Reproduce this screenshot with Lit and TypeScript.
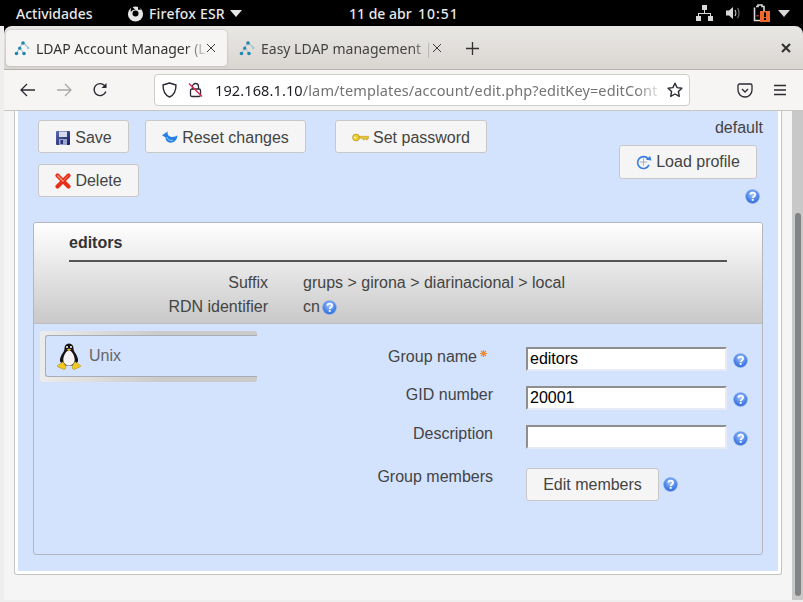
import { LitElement, html, css, svg } from "lit";
import { customElement } from "lit/decorators.js";

let uid = 0;

const help = () => {
  const id = `hg${uid++}`;
  return html`<svg class="help" width="15" height="15" viewBox="0 0 16 16" aria-label="Help">
    <defs><radialGradient id=${id} cx="50%" cy="35%" r="70%"><stop offset="0" stop-color="#a9c8f8"/><stop offset="0.6" stop-color="#4d86ea"/><stop offset="1" stop-color="#2d63cf"/></radialGradient></defs>
    <circle cx="8" cy="8" r="7.4" fill="url(#${id})" stroke="#8fb2ee" stroke-width=".6"/>
    <path d="M5.6 6.1c.2-1.5 1.3-2.2 2.6-2.2 1.5 0 2.5.9 2.5 2.1 0 1.9-2.5 1.9-2.5 3.7" fill="none" stroke="#fff" stroke-width="1.9"/>
    <rect x="7.2" y="10.6" width="2" height="2" fill="#fff"/>
  </svg>`;
};

const ldapIcon = html`<svg class="fav" width="16" height="16" viewBox="0 0 16 16">
  <path d="M9 2.5 2.5 13.5M9 2.5 14.5 8M6 8l4 5.5" stroke="#a9c4cf" stroke-width="1.1" fill="none"/>
  <g fill="#1f86ad"><circle cx="9" cy="3" r="1.8"/><circle cx="5.7" cy="8.2" r="1.6"/><circle cx="2.5" cy="13.5" r="1.8"/><circle cx="10" cy="13.5" r="1.8"/></g>
  <circle cx="14.2" cy="8" r="1.2" fill="#9fc3d1"/>
</svg>`;

const closeX = html`<svg width="10" height="10" viewBox="0 0 10 10"><path d="M1 1l8 8M9 1l-8 8" stroke="#3c3c3c" stroke-width="1" fill="none"/></svg>`;

const ffIcon = html`<svg width="17" height="17" viewBox="0 0 17 17">
  <circle cx="8.5" cy="9" r="7.6" fill="#e6e6e6"/>
  <circle cx="8.5" cy="8.4" r="3" fill="#000"/>
  <path d="M5.5 .8c.2 2 1 3 3 3.6-2 .2-3.700 1-4.600 2.700C3.400 4.800 4 2.400 5.500.8z" fill="#000"/>
  <path d="M11 1.200 14.500 4.500l-3.500.3z" fill="#000"/>
</svg>`;

const saveIcon = html`<svg class="sv" width="14" height="14" viewBox="0 0 14 14">
  <defs><linearGradient id="sv" x1="0" y1="0" x2="1" y2="1"><stop offset="0" stop-color="#5c6bb0"/><stop offset="1" stop-color="#141a5c"/></linearGradient></defs>
  <rect width="14" height="14" rx="1" fill="url(#sv)"/>
  <rect x="3" y="0.5" width="8" height="5.5" fill="#d5dbef"/>
  <rect x="3" y="8" width="8" height="6" fill="#9aa5cf"/>
  <rect x="4.5" y="9" width="2.5" height="4" fill="#2a3478"/>
</svg>`;

const resetIcon = html`<svg width="16" height="13" viewBox="0 0 17 13">
  <path d="M0 4 6 0v2.600c0 2 2.400 3.400 4.900 3.400 2.400 0 4.300-.5 5.600-1.800-.4 4.600-3 7.800-7.400 7.800C5 12 3.800 8.800 3.800 6.600L0 4z" fill="#2780e3"/>
  <path d="M5 6c1 2.400 3 4 6.500 3.600" stroke="#a7d0f7" stroke-width="1" fill="none"/>
</svg>`;

const keyIcon = html`<svg width="17" height="9" viewBox="0 0 17 9">
  <circle cx="4" cy="4.500" r="3.400" fill="#f2cf2e" stroke="#a8901c" stroke-width=".7"/>
  <path d="M7 3.300h9.500v2h-1v1.500h-1.500v-1.500h-1.500v1.500h-1.500v-1.500H7z" fill="#efc928" stroke="#a48c1c" stroke-width=".5"/>
  <circle cx="3" cy="4.500" r="1" fill="#fff7c4"/>
</svg>`;

const delIcon = html`<svg width="16" height="16" viewBox="0 0 16 16">
  <path d="M2.500 2.500 13.500 13.500M13.500 2.500 2.500 13.500" stroke="#e82f1a" stroke-width="4.100" stroke-linecap="round"/>
  <path d="M2.800 2.800 8 8" stroke="#ff9a80" stroke-width="1.300" stroke-linecap="round"/>
  <path d="M13.200 2.800 8 8" stroke="#ff8066" stroke-width="1" stroke-linecap="round"/>
</svg>`;

const loadIcon = html`<svg width="16" height="17" viewBox="0 0 17 17">
  <path d="M13.200 5A6.300 6.300 0 1 0 13.800 11" fill="none" stroke="#3b7de0" stroke-width="1.700"/>
  <path d="M10.500 5.500 16.500 6.500 15 1.500z" fill="#3b7de0"/>
  <path d="M8 4v8M4 8h8" stroke="#8c9bb4" stroke-width=".8"/>
</svg>`;

const penguin = html`<svg width="24" height="27" viewBox="0 0 24 27">
  <path d="M12 0.500c-3 0-4.500 2.200-4.500 5 0 2.300-1 3.200-2.300 5.300C3.700 13.500 2.600 16 3 18.500L7 22.500h10l4-4c.4-2.500-.7-5-2.200-7.700-1.300-2.100-2.300-3-2.300-5.300 0-2.800-1.500-5-4.500-5z" fill="#14141a"/>
  <path d="M12 7.500c-2.600 0-5.700 5-5.700 9.300 0 3.500 2.500 5.700 5.700 5.700s5.700-2.200 5.700-5.700c0-4.300-3.100-9.300-5.700-9.300z" fill="#f4f4f4"/>
  <path d="M9.800 6.500 12 5.500l2.200 1L12 8.200z" fill="#e8b923"/>
  <circle cx="10" cy="4" r="1" fill="#fff"/><circle cx="14" cy="4" r="1" fill="#fff"/>
  <path d="M5 19.500 .5 22.500c-.5.600 0 1.200.7 1.400l5 2.300c1.300.6 2.300 0 2.500-1.200.2-1.800-1-4.200-2-5.500-.5-.6-1.200-.7-1.700 0zM19 19.500l4.500 3c.5.600 0 1.200-.7 1.400l-5 2.300c-1.300.6-2.300 0-2.500-1.200-.2-1.800 1-4.200 2-5.500.5-.6 1.200-.7 1.700 0z" fill="#f4c81c" stroke="#a88410" stroke-width=".5"/>
</svg>`;

const star = svg`<path d="M8 1.200l2.100 4.400 4.800.6-3.500 3.300.9 4.800L8 12l-4.300 2.300.9-4.800L1.100 6.200l4.800-.6z" fill="none" stroke="#2b2a33" stroke-width="1.400" stroke-linejoin="round"/>`;

@customElement("app-root")
export class AppRoot extends LitElement {
  static styles = css`
    :host { display: block; width: 803px; height: 602px; overflow: hidden; font-family: "Liberation Sans", Arial, sans-serif; font-size: 16px; color: #444; }
    .root { display: flex; flex-direction: column; height: 602px; background: #eeeeee; }
    .topbar { height: 26px; flex: none; background: #000; color: #e8e8e8; display: flex; align-items: center; font-family: "Noto Sans", sans-serif; font-size: 14px; font-weight: 500; padding-left: 16px; box-sizing: border-box; }
    .act { width: 111px; }
    .ffmenu { display: flex; align-items: center; gap: 5px; width: 222px; letter-spacing: .2px; }
    .clock { width: 347px; white-space: pre; }
    .time { letter-spacing: 1px; margin-left: -1px; }
    .tray { display: flex; align-items: center; }
    .vol { margin-left: 13px; }
    .batt { margin-left: 11px; }
    .caret { margin-left: 8px; }
    .shell { flex: 1; min-height: 0; display: flex; flex-direction: column; padding: 0 0 2px 4px; background:
      linear-gradient(#000, #000) 4px 0 / 8px 8px no-repeat,
      linear-gradient(#000, #000) right 0 top 0 / 8px 8px no-repeat,
      #eeeeee; }
    .tabbar { height: 44px; flex: none; box-sizing: border-box; display: flex; align-items: center; background: linear-gradient(#e9e7e4, #d9d6d2); border-bottom: 1px solid #b4b2af; border-radius: 8px 8px 0 0; font-family: "Noto Sans", sans-serif; font-size: 14px; color: #333; padding-top: 1px; }
    .tab { display: flex; align-items: center; height: 36px; box-sizing: border-box; }
    .tab.active { margin-left: 2px; width: 221px; background: #f6f5f4; border-radius: 4px; padding-left: 8px; box-shadow: 0 0 2px rgba(0,0,0,.25); }
    .tab.other { width: 222px; margin-left: 4px; padding-left: 8px; color: #444; }
    .tab .name { margin-left: 6px; flex: 1; white-space: nowrap; overflow: hidden; -webkit-mask-image: linear-gradient(90deg, #000 87%, transparent 100%); mask-image: linear-gradient(90deg, #000 87%, transparent 100%); }
    .tab svg { flex: none; }
    .tab .x { margin: 0 11px 0 -2px; display: flex; }
    .plus { margin-left: 13px; display: flex; }
    .winclose { margin-left: auto; margin-right: 12px; display: flex; }
    .toolbar { height: 41px; flex: none; box-sizing: border-box; background: #f6f5f3; display: flex; align-items: center; border-bottom: 1px solid #c6c6c4; }
    .nav { display: flex; justify-content: center; width: 36px; }
    .nav.first { margin-left: 6px; }
    .urlbar { margin-left: 36px; width: 536px; height: 32px; box-sizing: border-box; background: #fff; border: 1px solid #cfcdca; border-radius: 4px; display: flex; align-items: center; font-family: "Noto Sans", sans-serif; font-size: 14.5px; color: #737373; }
    .urlbar .shield { margin-left: 7px; display: flex; }
    .urlbar .lock { margin-left: 11px; display: flex; }
    .url { margin-left: 12px; width: 448px; white-space: nowrap; overflow: hidden; letter-spacing: .12px; -webkit-mask-image: linear-gradient(90deg, #000 94%, transparent 100%); mask-image: linear-gradient(90deg, #000 94%, transparent 100%); }
    .url b { font-weight: 400; color: #1c1b22; }
    .urlbar .star { margin-left: 4px; display: flex; }
    .pocket { margin-left: 47px; display: flex; }
    .burger { margin-left: 20px; display: flex; }
    .view { flex: 1; min-height: 0; display: flex; background: #f5f5f5; }
    .page { flex: 1; min-width: 0; padding: 0 10px; }
    .scroll { width: 11px; flex: none; background: #c8c8c8; display: flex; align-items: flex-end; padding: 0 0 4px 3px; box-sizing: border-box; }
    .thumb { width: 6px; height: 383px; background: #808486; border-radius: 3px; }
    .frame { height: 464px; box-sizing: border-box; border: 1px solid #c4c4c4; border-top: 0; border-radius: 0 0 3px 3px; padding: 0 3px 3px; background: #fff; }
    .blue { height: 460px; background: #d3e2fd; box-sizing: border-box; padding: 9px 15px 0; }
    .top { height: 102px; display: flex; justify-content: space-between; padding-left: 5px; }
    .row { display: flex; }
    .row + .row { margin-top: 11px; }
    .row.first .btn { padding-top: 2px; }
    .btn { height: 33px; box-sizing: border-box; border: 1px solid #c8c8c8; border-radius: 3px; background: #f5f5f5; color: #444; display: flex; align-items: center; justify-content: center; font: inherit; gap: 4px; padding: 0; }
    .btn .sv { margin: 0 1px; }
    .save { width: 91px; } .reset { width: 161px; margin-left: 16px; } .pwd { width: 152px; margin-left: 29px; } .del { width: 101px; }
    .side { display: flex; flex-direction: column; align-items: flex-end; margin-top: -2px; }
    .side .lbl { line-height: 20px; }
    .load { width: 138px; height: 34px; margin: 7px 6px 0 0; }
    .side .help { margin: 10px 3px 0 0; }
    .help { display: block; flex: none; }
    .box { height: 333px; box-sizing: border-box; border: 1px solid #b2b7bf; border-radius: 3px; display: flex; flex-direction: column; }
    .head { height: 101px; box-sizing: border-box; background: linear-gradient(#ffffff, #c9c9c9); border-bottom: 1px solid #bdbdbd; padding: 10px 35px 0; border-radius: 2px 2px 0 0; }
    .title { margin: 0; font-size: 16px; font-weight: 700; line-height: 20px; color: #333; padding-bottom: 7px; border-bottom: 2px solid #555; }
    .meta { display: grid; grid-template-columns: 199px auto; column-gap: 35px; row-gap: 4px; margin: 11px 0 0 0; line-height: 20px; }
    .meta .k { text-align: right; }
    .meta .v { display: flex; align-items: center; gap: 2px; }
    .body { flex: 1; display: flex; padding: 7px 0 0 6px; }
    .modtab { width: 217px; height: 51px; flex: none; box-sizing: border-box; padding: 4px 0 5px 5px; background: linear-gradient(90deg, #ececec, #cbcbcb 55%); border-radius: 3px; }
    .modin { height: 42px; box-sizing: border-box; background: #d3e2fd; border: 1px solid #a8adb5; border-right: 0; border-radius: 3px 0 0 3px; display: flex; align-items: center; padding-left: 11px; color: #666; gap: 8px; }
    .form { margin: 16px 0 0 0; display: grid; grid-template-columns: 236px auto; column-gap: 33px; justify-content: start; align-content: start; }
    .f-l { text-align: right; line-height: 20px; display: flex; justify-content: flex-end; align-items: flex-start; gap: 3px; }
    .f-l .ast { margin: 3px 6px 0 0; }
    .f-c { display: flex; align-items: center; gap: 6px; height: 24px; margin-bottom: 15px; }
    .f-c .help { margin-top: 3px; }
    .f-l.sh { margin-top: -1px; }
    .inp { width: 201px; height: 24px; box-sizing: border-box; border: 2px solid; border-color: #8e8e8e #e6ebf5 #e6ebf5 #8e8e8e; background: #fff; color: #000; font: 16px "Liberation Sans", Arial, sans-serif; padding: 1px 2px; margin: 0; outline: 0; }
    .f-c.b { height: 33px; gap: 4px; margin: 4px 0 0; }
    .f-c.b .help { margin-top: 0; }
    .f-l.b { margin-top: 3px; }
    .edit { width: 133px; }
  `;

  render() {
    return html`<div class="root">
      <div class="topbar">
        <span class="act">Actividades</span>
        <span class="ffmenu">${ffIcon}<span>Firefox ESR</span>
          <svg width="12" height="7" viewBox="0 0 12 7"><path d="M0 0h12L6 7z" fill="#e8e8e8"/></svg></span>
        <span class="clock">11 de abr  <span class="time">10:51</span></span>
        <span class="tray">
          <svg width="17" height="16" viewBox="0 0 17 16" fill="#d8d8d8"><rect x="6" y="0" width="5" height="5"/><rect x="0" y="11" width="5" height="5"/><rect x="12" y="11" width="5" height="5"/><path d="M8 5h1v3h6v3h-1V9H3v2H2V8h6z"/></svg>
          <svg class="vol" width="16" height="14" viewBox="0 0 16 14"><path d="M0 4.500h3L7 1v12L3 9.500H0z" fill="#d8d8d8"/><path d="M9 4c1 1.500 1 4.500 0 6" stroke="#bbb" stroke-width="1.300" fill="none"/><path d="M11.500 2c2 2.500 2 7.500 0 10" stroke="#666" stroke-width="1.300" fill="none"/></svg>
          <svg class="batt" width="17" height="18" viewBox="0 0 17 18"><path d="M3 2.500h2V1h4v1.500h2V8M8 16.500H1.500V3.500" fill="none" stroke="#d8d8d8" stroke-width="1.600"/><rect x="3.500" y="11" width="2" height="1.500" fill="#e8402a"/><rect x="7" y="7" width="10" height="11" fill="#f0672c"/><rect x="11" y="8.500" width="2" height="4.500" fill="#000"/><rect x="11" y="14" width="2" height="2" fill="#000"/></svg>
          <svg class="caret" width="12" height="7" viewBox="0 0 12 7"><path d="M0 0h12L6 7z" fill="#d8d8d8"/></svg>
        </span>
      </div>
      <div class="shell">
        <div class="tabbar">
          <div class="tab active">${ldapIcon}<span class="name">LDAP Account Manager (L</span><span class="x">${closeX}</span></div>
          <div class="tab other">${ldapIcon}<span class="name">Easy LDAP management |</span><span class="x">${closeX}</span></div>
          <span class="plus"><svg width="13" height="13" viewBox="0 0 13 13"><path d="M6.500 0v13M0 6.500h13" stroke="#333" stroke-width="1.300"/></svg></span>
          <span class="winclose"><svg width="10" height="10" viewBox="0 0 10 10"><path d="M1 1l8 8M9 1l-8 8" stroke="#2e2e2e" stroke-width="2"/></svg></span>
        </div>
        <div class="toolbar">
          <span class="nav first"><svg width="16" height="14" viewBox="0 0 16 14"><path d="M15 7H1.500M7 1 1 7l6 6" fill="none" stroke="#2b2a33" stroke-width="1.300"/></svg></span>
          <span class="nav"><svg width="16" height="14" viewBox="0 0 16 14"><path d="M1 7h13.500M9 1l6 6-6 6" fill="none" stroke="#a8a8ac" stroke-width="1.300"/></svg></span>
          <span class="nav"><svg width="16" height="16" viewBox="0 0 16 16"><path d="M13.800 9.500A6 6 0 1 1 12.500 3.500L14 5" fill="none" stroke="#2b2a33" stroke-width="1.400"/><path d="M14.500 1v5h-5z" fill="#2b2a33"/></svg></span>
          <div class="urlbar">
            <span class="shield"><svg width="15" height="16" viewBox="0 0 15 16"><path d="M7.500 1 14 3c0 6-1.500 10-6.500 12C2.500 13 1 9 1 3z" fill="none" stroke="#2b2a33" stroke-width="1.400" stroke-linejoin="round"/></svg></span>
            <span class="lock"><svg width="15" height="16" viewBox="0 0 15 16"><rect x="2.500" y="7" width="10" height="7.500" rx="1.500" fill="none" stroke="#2b2a33" stroke-width="1.300"/><path d="M4.500 7V4.500a3 3 0 0 1 6 0V7" fill="none" stroke="#2b2a33" stroke-width="1.300"/><path d="M1 1.500 14 14.500" stroke="#e22850" stroke-width="1.500"/></svg></span>
            <span class="url"><b>192.168.1.10</b>/lam/templates/account/edit.php?editKey=editCont</span>
            <span class="star"><svg width="16" height="16" viewBox="0 0 16 16">${star}</svg></span>
          </div>
          <span class="pocket"><svg width="16" height="15" viewBox="0 0 16 15"><path d="M1 2.500A1.500 1.500 0 0 1 2.500 1h11A1.500 1.500 0 0 1 15 2.500V7a7 7 0 0 1-14 0z" fill="none" stroke="#2b2a33" stroke-width="1.300"/><path d="M5 6l3 3 3-3" fill="none" stroke="#2b2a33" stroke-width="1.300"/></svg></span>
          <span class="burger"><svg width="14" height="12" viewBox="0 0 14 12"><path d="M1 1.500h12M1 6h12M1 10.500h12" stroke="#2b2a33" stroke-width="1.300"/></svg></span>
        </div>
        <div class="view">
          <div class="page">
            <div class="frame">
              <div class="blue">
                <div class="top">
                  <div>
                    <div class="row first">
                      <button class="btn save">${saveIcon}<span>Save</span></button>
                      <button class="btn reset">${resetIcon}<span>Reset changes</span></button>
                      <button class="btn pwd">${keyIcon}<span>Set password</span></button>
                    </div>
                    <div class="row"><button class="btn del">${delIcon}<span>Delete</span></button></div>
                  </div>
                  <div class="side">
                    <span class="lbl">default</span>
                    <button class="btn load">${loadIcon}<span>Load profile</span></button>
                    ${help()}
                  </div>
                </div>
                <div class="box">
                  <div class="head">
                    <h2 class="title">editors</h2>
                    <div class="meta">
                      <span class="k">Suffix</span><span class="v">grups &gt; girona &gt; diarinacional &gt; local</span>
                      <span class="k">RDN identifier</span><span class="v">cn ${help()}</span>
                    </div>
                  </div>
                  <div class="body">
                    <div class="modtab"><div class="modin">${penguin}<span>Unix</span></div></div>
                    <div class="form">
                      <span class="f-l">Group name<svg class="ast" width="7" height="7" viewBox="0 0 9 9"><path d="M4.500 0v9M0 4.500h9M1.300 1.300l6.400 6.400M7.700 1.300 1.300 7.700" stroke="#ef8a2e" stroke-width="1.500"/></svg></span>
                      <div class="f-c"><input class="inp" .value=${"editors"} />${help()}</div>
                      <span class="f-l sh">GID number</span>
                      <div class="f-c"><input class="inp" .value=${"20001"} />${help()}</div>
                      <span class="f-l sh">Description</span>
                      <div class="f-c"><input class="inp" .value=${""} />${help()}</div>
                      <span class="f-l b">Group members</span>
                      <div class="f-c b"><button class="btn edit">Edit members</button>${help()}</div>
                    </div>
                  </div>
                </div>
              </div>
            </div>
          </div>
          <div class="scroll"><div class="thumb"></div></div>
        </div>
      </div>
    </div>`;
  }
}
